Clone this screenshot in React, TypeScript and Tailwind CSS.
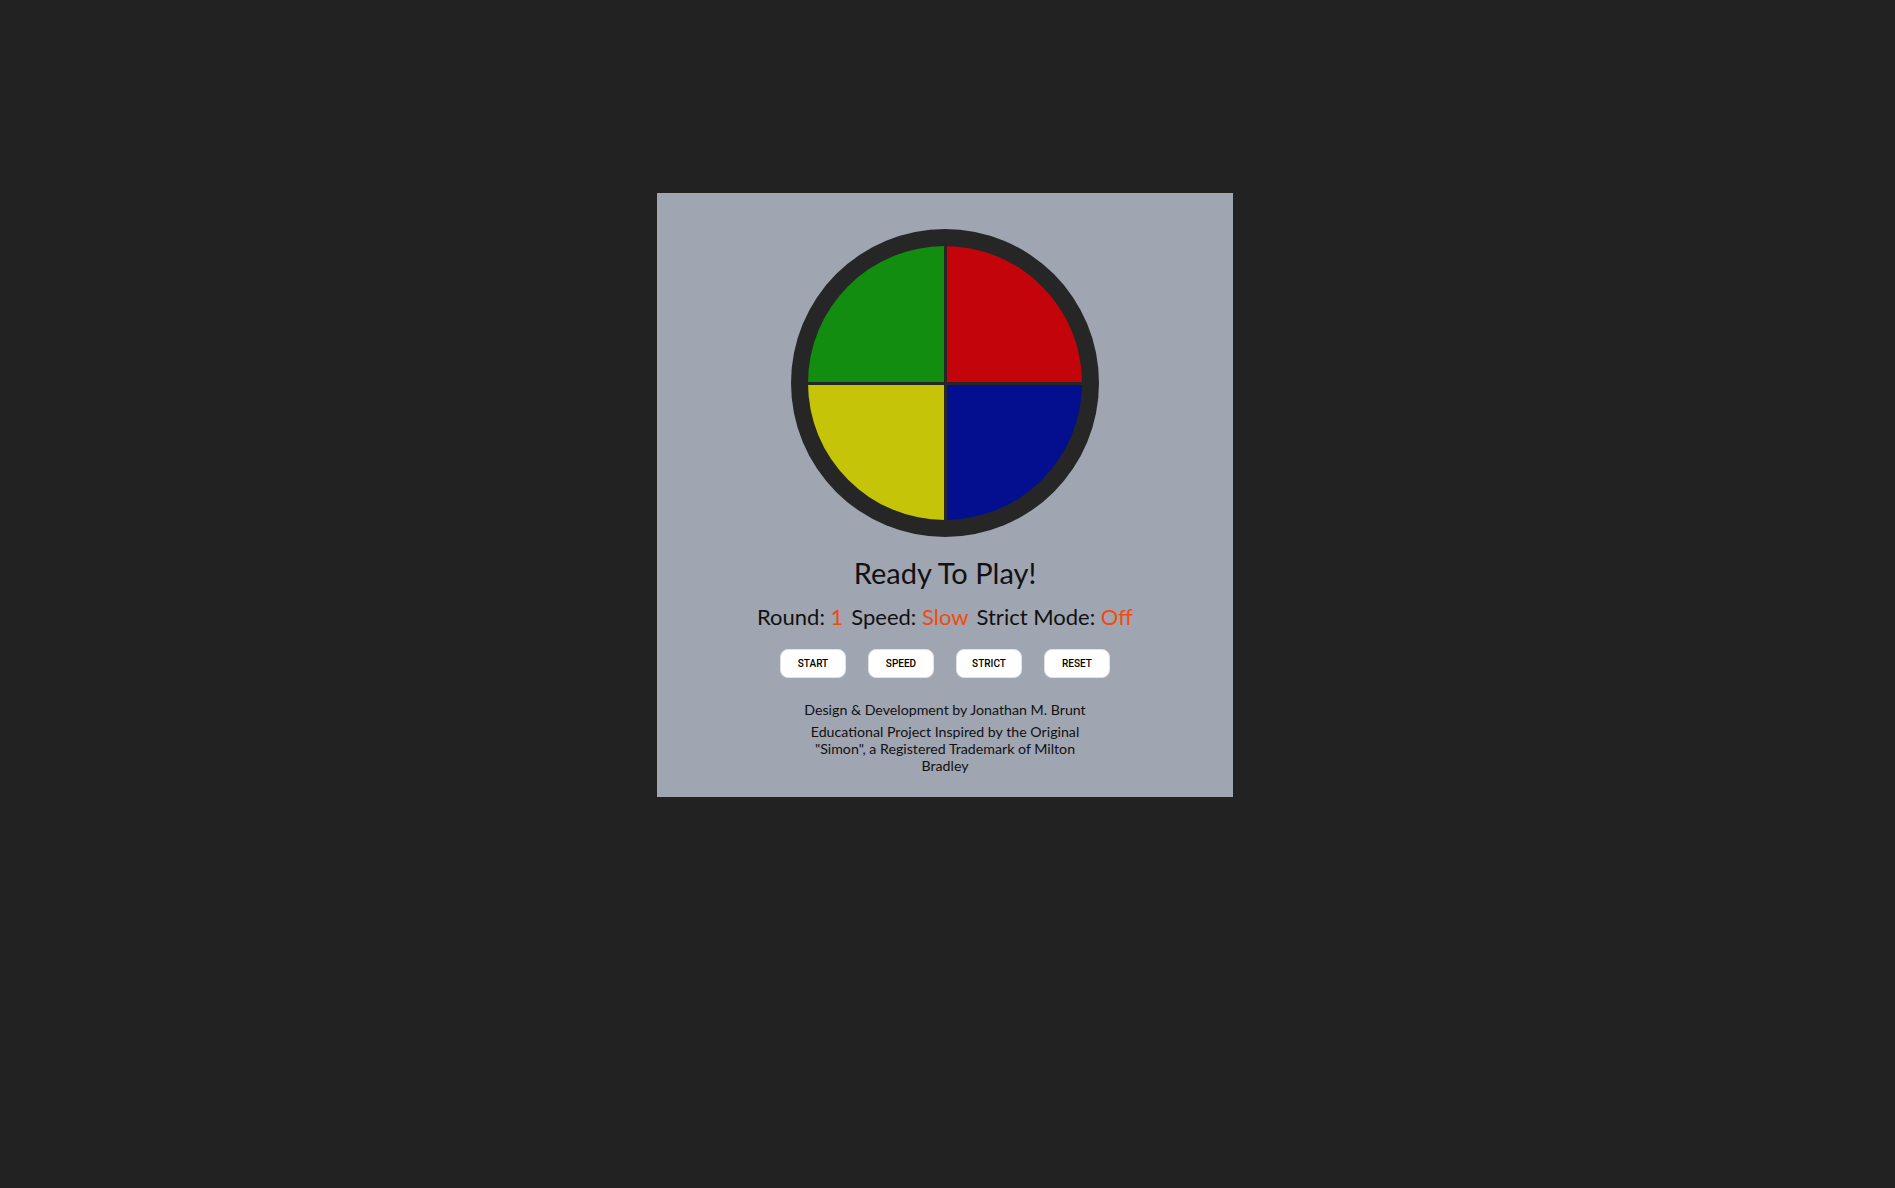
import React from "react";

const quads = [
  { name: "green", bg: "bg-[#128d10]" },
  { name: "red", bg: "bg-[#c3040a]" },
  { name: "yellow", bg: "bg-[#c5c409]" },
  { name: "blue", bg: "bg-[#030f8f]" },
];

const buttons = ["START", "SPEED", "STRICT", "RESET"];

export default function App() {
  return (
    <div className="min-h-screen w-full bg-[#222222] font-['Lato','Noto_Sans',sans-serif] text-black">
      <div className="flex justify-center pt-[193px] pr-[5px]">
        <div className="flex h-[604px] w-[576px] flex-col items-center bg-[#9fa5b1] pt-[36px]">
          {/* game board */}
          <div className="h-[308px] w-[308px] rounded-full bg-[#262626] p-[17px]">
            <div className="grid h-full w-full grid-cols-2 grid-rows-2 gap-[3px] overflow-hidden rounded-full">
              {quads.map((q) => (
                <button key={q.name} aria-label={q.name} className={`${q.bg} cursor-pointer`} />
              ))}
            </div>
          </div>

          <h1 className="mt-[19px] text-[29px] leading-[34px] font-normal text-[#111]">Ready To Play!</h1>

          <div className="mt-[14px] flex gap-[8px] text-[22px] leading-[26px] text-[#111]">
            <span>
              Round: <span className="text-[#f24b0e]">1</span>
            </span>
            <span>
              Speed: <span className="text-[#f24b0e]">Slow</span>
            </span>
            <span>
              Strict Mode: <span className="text-[#f24b0e]">Off</span>
            </span>
          </div>

          <div className="mt-[19px] flex gap-[22px]">
            {buttons.map((b) => (
              <button
                key={b}
                className="h-[29px] w-[66px] rounded-[8px] border border-[#e2e2e2] bg-white font-['Roboto',Arial,sans-serif] text-[10px] font-medium text-black"
              >
                {b}
              </button>
            ))}
          </div>

          <div className="mt-[23px] flex flex-col items-center text-center text-[14.2px] leading-[17px] text-[#111]">
            <p>Design &amp; Development by Jonathan M. Brunt</p>
            <p className="mt-[5px] w-[280px]">
              Educational Project Inspired by the Original "Simon", a Registered Trademark of Milton Bradley
            </p>
          </div>
        </div>
      </div>
    </div>
  );
}
